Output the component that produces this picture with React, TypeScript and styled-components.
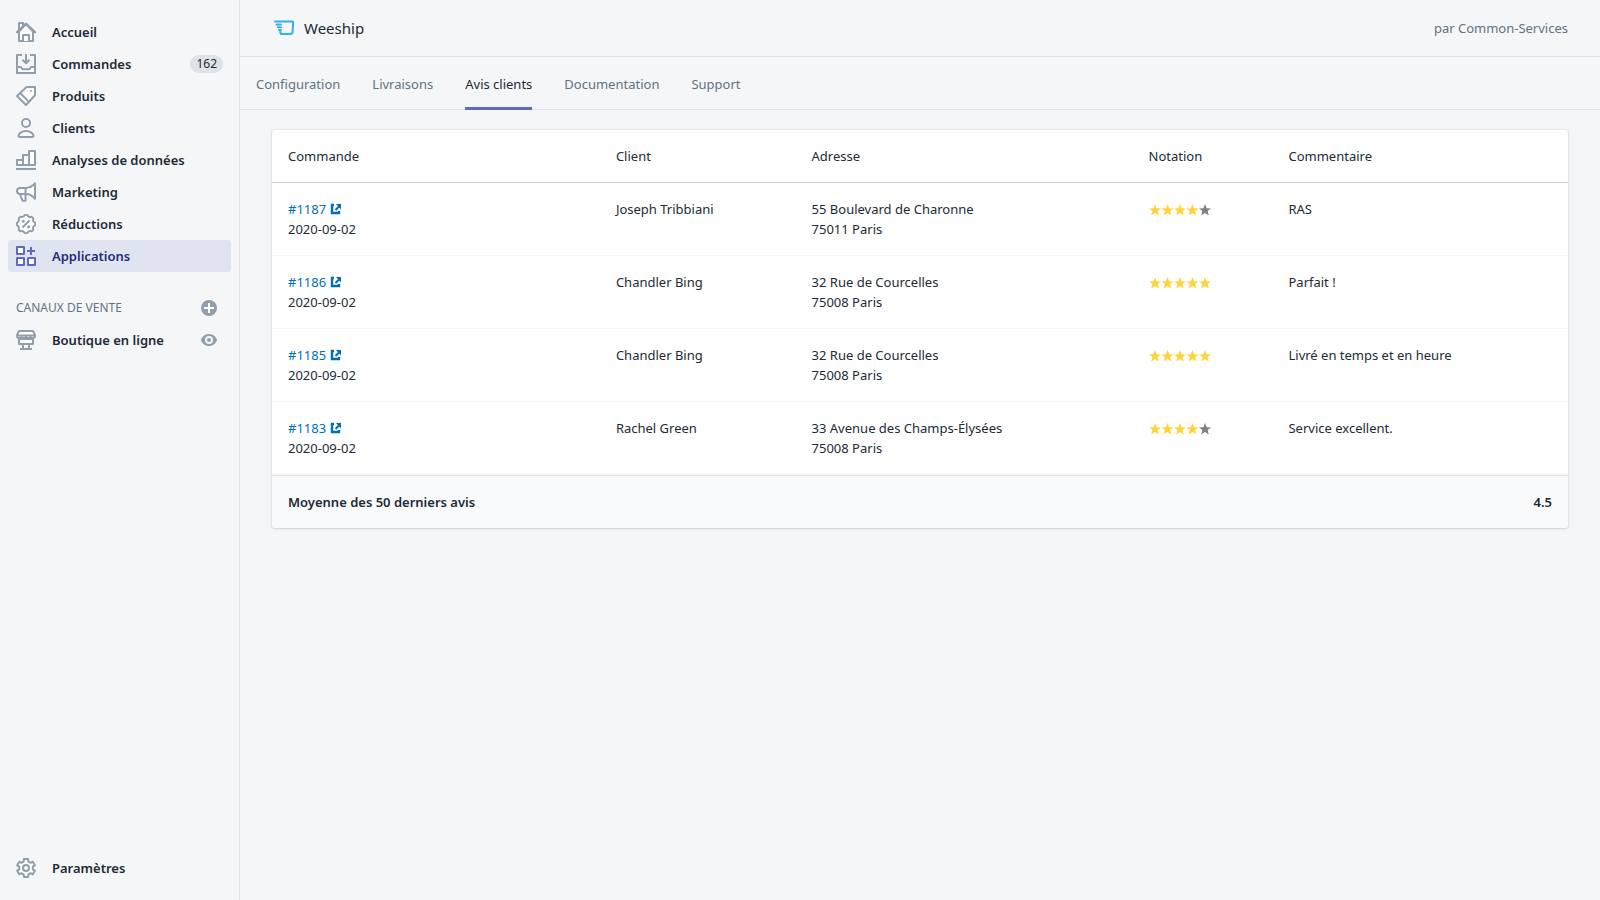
import React from "react";
import styled, { createGlobalStyle, css } from "styled-components";

const GlobalStyle = createGlobalStyle`
  *, *::before, *::after { box-sizing: border-box; }
  body {
    margin: 0;
    background: #f4f6f8;
    color: #212b36;
    font-family: "Segoe UI", "Noto Sans", "Open Sans", sans-serif;
    font-size: 13px;
    line-height: 20px;
  }
`;

const Frame = styled.div`
  display: grid;
  grid-template-columns: 240px minmax(0, 1fr);
  min-height: 100vh;
`;

const Sidebar = styled.nav`
  display: flex;
  flex-direction: column;
  justify-content: space-between;
  padding: 16px 8px;
  border-right: 1px solid #dfe3e8;
`;

const NavList = styled.ul`
  list-style: none;
  margin: 0;
  padding: 0;
`;

const NavItem = styled.li`
  display: flex;
  align-items: center;
`;

const NavLink = styled.a<{ $active?: boolean }>`
  flex: 1;
  display: flex;
  align-items: center;
  gap: 16px;
  height: 32px;
  padding: 0 8px;
  border-radius: 3px;
  color: #212b36;
  font-weight: 600;
  text-decoration: none;
  ${(p) =>
    p.$active &&
    css`
      background: #e0e4f1;
      color: #202e78;
    `}
`;

const Badge = styled.span`
  margin-left: auto;
  padding: 0 6px;
  border-radius: 9px;
  background: #dfe3e8;
  color: #212b36;
  font-size: 12px;
  font-weight: 400;
  line-height: 18px;
`;

const SectionHead = styled.div`
  display: flex;
  align-items: center;
  justify-content: space-between;
  height: 32px;
  margin-top: 20px;
  padding: 0 8px;
`;

const SectionTitle = styled.h2`
  margin: 0;
  color: #637381;
  font-size: 12px;
  font-weight: 400;
  text-transform: uppercase;
`;

const IconButton = styled.button`
  display: flex;
  padding: 2px;
  margin-right: 4px;
  border: 0;
  background: none;
  color: #919eab;
`;

const TrailingButton = styled(IconButton)`
  margin-right: 12px;
`;

const NavIcon = styled.svg<{ $active?: boolean }>`
  flex: none;
  width: 20px;
  height: 20px;
  fill: #fff;
  stroke: ${(p) => (p.$active ? "#5c6ac4" : "#919eab")};
  stroke-width: 2;
  stroke-linejoin: round;
`;

const Main = styled.main`
  min-width: 0;
`;

const TitleBar = styled.header`
  display: flex;
  align-items: center;
  justify-content: space-between;
  height: 57px;
  padding: 0 32px;
  border-bottom: 1px solid #dfe3e8;
`;

const Brand = styled.h1`
  display: flex;
  align-items: center;
  gap: 8px;
  margin: 0;
  font-size: 15px;
  font-weight: 400;
`;

const Author = styled.span`
  color: #637381;
`;

const Tabs = styled.div`
  display: flex;
  gap: 32px;
  height: 53px;
  padding: 0 16px;
  border-bottom: 1px solid #dfe3e8;
`;

const Tab = styled.button<{ $active?: boolean }>`
  height: 53px;
  padding: 3px 0 0;
  border: 0;
  border-bottom: 3px solid ${(p) => (p.$active ? "#5c6ac4" : "transparent")};
  background: none;
  color: ${(p) => (p.$active ? "#212b36" : "#637381")};
  font: inherit;
`;

const Card = styled.section`
  margin: 20px 32px;
  overflow: hidden;
  border-radius: 3px;
  background: #fff;
  box-shadow: 0 0 0 1px rgba(63, 63, 68, 0.05), 0 1px 3px rgba(63, 63, 68, 0.15);
`;

const Table = styled.table`
  width: 100%;
  border-collapse: separate;
  border-spacing: 0;
  table-layout: fixed;
`;

const Column = styled.col<{ $width?: string }>`
  width: ${(p) => p.$width ?? "auto"};
`;

const HeadCell = styled.th`
  padding: 16px;
  border-bottom: 1px solid #c4cdd5;
  font-weight: 400;
  text-align: left;
`;

const Cell = styled.td`
  padding: 16px;
  border-bottom: 1px solid #f4f6f8;
  vertical-align: top;
`;

const FootLabel = styled.th`
  padding: 16px;
  border-top: 1px solid #dfe3e8;
  background: #f9fafb;
  font-weight: 600;
  text-align: left;
`;

const FootValue = styled.td`
  padding: 16px;
  border-top: 1px solid #dfe3e8;
  background: #f9fafb;
  font-weight: 600;
  text-align: right;
`;

const OrderLink = styled.a`
  display: inline-flex;
  align-items: center;
  gap: 4px;
  color: #006fbb;
  text-decoration: none;
`;

const Line = styled.div``;

const StarRow = styled.svg`
  display: block;
  width: 63px;
  height: 20px;
`;

const cog = Array.from({ length: 6 }, (_, i) => {
  const at = (deg: number, r: number) => {
    const a = ((i * 60 + deg - 90) * Math.PI) / 180;
    return `${(10 + r * Math.cos(a)).toFixed(2)} ${(10 + r * Math.sin(a)).toFixed(2)}`;
  };
  return `${i ? "L" : "M"}${at(-13, 9.2)}L${at(13, 9.2)}L${at(19, 6.9)}L${at(41, 6.9)}`;
}).join("") + "Z";

const scallop = Array.from({ length: 8 }, (_, i) => {
  const at = (deg: number, r: number) => {
    const a = ((i * 45 + deg - 90) * Math.PI) / 180;
    return `${(10 + r * Math.cos(a)).toFixed(2)} ${(10 + r * Math.sin(a)).toFixed(2)}`;
  };
  return `${i ? "" : `M${at(-22.5, 7.8)}`}Q${at(-14, 8.2)} ${at(-9, 8.9)}Q${at(0, 9.8)} ${at(9, 8.9)}Q${at(14, 8.2)} ${at(22.5, 7.8)}`;
}).join("") + "Z";

const icons: Record<string, React.ReactNode> = {
  home: (
    <>
      <path d="M3 9V1h4v3" />
      <path d="M3 9.500V19h14V9.500L10 2Z" />
      <path d="M1 11.200V10L10 1.600 19 10v1.200" fill="none" />
      <path d="M7 19v-6h6v6" />
    </>
  ),
  orders: (
    <>
      <path d="M6 1H1v18h18V1h-5" fill="none" />
      <path d="M1 13h4l1.500 2.200h7L15 13h4v6H1Z" />
      <path d="M10 0v9M6.500 5.800 10 9.200l3.500-3.400" fill="none" />
    </>
  ),
  products: (
    <>
      <path d="M10.600 1H19v8.300L10 19 1 10Z" />
      <path d="m4.200 7.200 8.900 8.700" fill="none" />
      <circle cx="15" cy="5" r="1" fill="#919eab" stroke="none" />
    </>
  ),
  customers: (
    <>
      <circle cx="10" cy="5" r="4" />
      <path d="M3.500 19c-.6 0-1-.5-1-1 0-2.500 3.300-5 7.500-5s7.500 2.500 7.500 5c0 .5-.4 1-1 1Z" />
    </>
  ),
  analytics: (
    <>
      <path d="M1 10h6v5H1ZM7 5h6v10H7ZM13 1h6v14h-6Z" />
      <path d="M0 19h20" />
    </>
  ),
  marketing: (
    <>
      <path d="M4 11v1l2.500 6.700h3V12" />
      <path d="M4.500 6H10c3 0 6.500-1.700 9-4.800v15.600C16.500 13.700 13 12 10 12H4.500C2.500 12 1 10.800 1 9s1.500-3 3.500-3Z" />
      <path d="M9.500 6v6" />
    </>
  ),
  discounts: (
    <>
      <path d={scallop} />
      <path d="m6.500 13.500 7-7" />
      <circle cx="7.300" cy="7.300" r="1.500" fill="#919eab" stroke="none" />
      <circle cx="12.700" cy="12.700" r="1.500" fill="#919eab" stroke="none" />
    </>
  ),
  apps: <path d="M1 1h7v7H1ZM1 12h7v7H1ZM12 12h7v7h-7ZM15 1v8M11 5h8" />,
  store: (
    <>
      <path d="M3 9h14v5H3Z" />
      <path d="M3 1h14l2 4v1c0 1.200-1 2-2.200 2S14.500 7.400 14.500 6.500C14.500 7.400 13.500 8 12.200 8S10 7.400 10 6.500C10 7.400 9 8 7.800 8S5.500 7.400 5.500 6.500C5.500 7.400 4.400 8 3.200 8S1 7.200 1 6V5Z" />
      <path d="M1 5.500h18M7 15v3M13 15v3M4 19h12" />
    </>
  ),
  settings: (
    <>
      <path d={cog} />
      <circle cx="10" cy="10" r="3" />
    </>
  ),
};

type Entry = { icon: string; label: string; badge?: string; active?: boolean };

const entries: Entry[] = [
  { icon: "home", label: "Accueil" },
  { icon: "orders", label: "Commandes", badge: "162" },
  { icon: "products", label: "Produits" },
  { icon: "customers", label: "Clients" },
  { icon: "analytics", label: "Analyses de données" },
  { icon: "marketing", label: "Marketing" },
  { icon: "discounts", label: "Réductions" },
  { icon: "apps", label: "Applications", active: true },
];

const tabs = ["Configuration", "Livraisons", "Avis clients", "Documentation", "Support"];

const reviews = [
  { order: "#1187", client: "Joseph Tribbiani", street: "55 Boulevard de Charonne", city: "75011 Paris", stars: 4, comment: "RAS" },
  { order: "#1186", client: "Chandler Bing", street: "32 Rue de Courcelles", city: "75008 Paris", stars: 5, comment: "Parfait !" },
  { order: "#1185", client: "Chandler Bing", street: "32 Rue de Courcelles", city: "75008 Paris", stars: 5, comment: "Livré en temps et en heure" },
  { order: "#1183", client: "Rachel Green", street: "33 Avenue des Champs-Élysées", city: "75008 Paris", stars: 4, comment: "Service excellent." },
];

function NavEntry({ icon, label, badge, active }: Entry) {
  return (
    <NavLink href="#" $active={active} aria-current={active ? "page" : undefined}>
      <NavIcon viewBox="0 0 20 20" $active={active} aria-hidden="true">
        {icons[icon]}
      </NavIcon>
      {label}
      {badge && <Badge>{badge}</Badge>}
    </NavLink>
  );
}

function Stars({ count }: { count: number }) {
  return (
    <StarRow viewBox="0 0 63 20" role="img" aria-label={`${count} sur 5`}>
      {[0, 1, 2, 3, 4].map((i) => (
        <path
          key={i}
          transform={`translate(${i * 12.5 - 0.5} 4.5)`}
          d="M6.500.5 8.100 4.700l4.400.2-3.400 2.700 1.200 4.300-3.800-2.500-3.800 2.500 1.200-4.300L.5 4.900l4.400-.2Z"
          fill={i < count ? "#ffd43b" : "#808080"}
        />
      ))}
    </StarRow>
  );
}

export default function App() {
  return (
    <>
      <GlobalStyle />
      <Frame>
        <Sidebar>
          <div>
            <NavList>
              {entries.map((e) => (
                <NavItem key={e.label}>
                  <NavEntry {...e} />
                </NavItem>
              ))}
            </NavList>
            <SectionHead>
              <SectionTitle>Canaux de vente</SectionTitle>
              <IconButton aria-label="Ajouter un canal">
                <svg width="16" height="16" viewBox="0 0 16 16">
                  <circle cx="8" cy="8" r="8" fill="currentColor" />
                  <path d="M8 3v10M3 8h10" stroke="#fff" strokeWidth="2" />
                </svg>
              </IconButton>
            </SectionHead>
            <NavList>
              <NavItem>
                <NavEntry icon="store" label="Boutique en ligne" />
                <TrailingButton aria-label="Voir la boutique">
                  <svg width="16" height="16" viewBox="0 0 16 16">
                    <path
                      fill="currentColor"
                      fillRule="evenodd"
                      d="M8 2C2.500 2 .2 7 .1 7.600v.8C.2 9 2.500 14 8 14s7.800-5 7.900-5.600v-.8C15.800 7 13.500 2 8 2Zm0 2a4 4 0 1 1 0 8 4 4 0 0 1 0-8Z"
                    />
                    <circle cx="8" cy="8" r="2" fill="currentColor" />
                  </svg>
                </TrailingButton>
              </NavItem>
            </NavList>
          </div>
          <NavList>
            <NavItem>
              <NavEntry icon="settings" label="Paramètres" />
            </NavItem>
          </NavList>
        </Sidebar>
        <Main>
          <TitleBar>
            <Brand>
              <svg width="24" height="20" viewBox="0 0 24 20" fill="none" stroke="#36b0e8" strokeWidth="2" strokeLinecap="round" strokeLinejoin="round" aria-hidden="true">
                <path d="M3 3.500h17q1.300 0 1.200 1.500l-.7 9.500q-.2 1.500-1.700 1.500h-8.800q-1.500 0-1.800-2M4.500 6.500H9M6 9.300h3M7 12h2" />
              </svg>
              Weeship
            </Brand>
            <Author>par Common-Services</Author>
          </TitleBar>
          <Tabs role="tablist">
            {tabs.map((t) => (
              <Tab key={t} role="tab" aria-selected={t === "Avis clients"} $active={t === "Avis clients"}>
                {t}
              </Tab>
            ))}
          </Tabs>
          <Card>
            <Table>
              <colgroup>
                <Column $width="25.3%" />
                <Column $width="15.1%" />
                <Column $width="26%" />
                <Column $width="10.8%" />
                <Column />
              </colgroup>
              <thead>
                <tr>
                  {["Commande", "Client", "Adresse", "Notation", "Commentaire"].map((h) => (
                    <HeadCell key={h} scope="col">{h}</HeadCell>
                  ))}
                </tr>
              </thead>
              <tbody>
                {reviews.map((r) => (
                  <tr key={r.order}>
                    <Cell>
                      <Line>
                        <OrderLink href="#">
                          {r.order}
                          <svg width="12" height="12" viewBox="0 0 12 12" fill="none" stroke="currentColor" strokeWidth="2" aria-hidden="true">
                            <path d="M4 2H2v8h7V8" strokeWidth="2.400" />
                            <path d="M5.500 7 9 3.500" />
                            <path d="M6 1h5v5.500Z" fill="currentColor" stroke="none" />
                          </svg>
                        </OrderLink>
                      </Line>
                      <Line>2020-09-02</Line>
                    </Cell>
                    <Cell>{r.client}</Cell>
                    <Cell>
                      <Line>{r.street}</Line>
                      <Line>{r.city}</Line>
                    </Cell>
                    <Cell>
                      <Stars count={r.stars} />
                    </Cell>
                    <Cell>{r.comment}</Cell>
                  </tr>
                ))}
              </tbody>
              <tfoot>
                <tr>
                  <FootLabel scope="row" colSpan={4}>Moyenne des 50 derniers avis</FootLabel>
                  <FootValue>4.5</FootValue>
                </tr>
              </tfoot>
            </Table>
          </Card>
        </Main>
      </Frame>
    </>
  );
}
